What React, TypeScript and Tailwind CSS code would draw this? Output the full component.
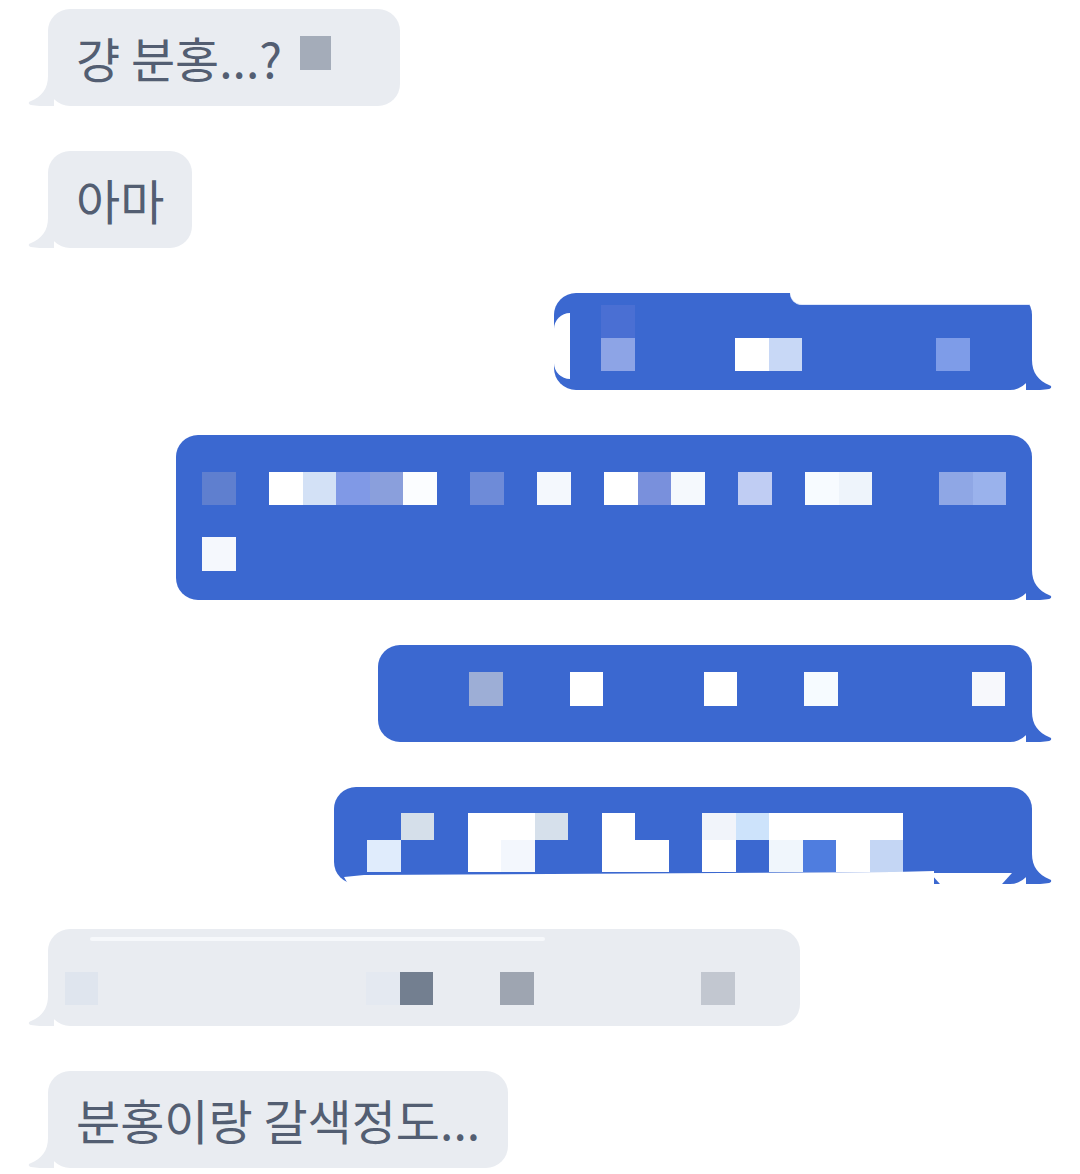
import React from "react";

type Row = (string | null)[];

function Cells({ row, h }: { row: Row; h: string }) {
  return (
    <div className="flex">
      {row.map((c, i) => (
        <div key={i} className={`w-[33.5px] shrink-0 ${h} ${c ?? ""}`} />
      ))}
    </div>
  );
}

function TailLeft({ fill }: { fill: string }) {
  return (
    <svg
      className="absolute left-[-20px] bottom-0"
      width="26"
      height="30"
      viewBox="0 0 26 30"
    >
      <path
        d="M20 0 C20 12 14 21 2 25.5 C0 26.3 0.5 28.5 3 29 C8 30 14 30 26 30 L26 0 Z"
        fill={fill}
      />
    </svg>
  );
}

function TailRight({ fill }: { fill: string }) {
  return (
    <svg
      className="absolute right-[-20px] bottom-0"
      width="26"
      height="30"
      viewBox="0 0 26 30"
    >
      <path
        d="M6 0 C6 12 12 21 24 25.5 C26 26.3 25.5 28.5 23 29 C18 30 12 30 0 30 L0 0 Z"
        fill={fill}
      />
    </svg>
  );
}

const GRAY = "#e9ecf1";
const BLUE = "#3b68d0";

function LeftBubble({
  width,
  children,
}: {
  width: string;
  children: React.ReactNode;
}) {
  return (
    <div className={`relative ml-[48px] h-[97px] ${width} rounded-[22px] bg-[#e9ecf1]`}>
      <TailLeft fill={GRAY} />
      {children}
    </div>
  );
}

function RightBubble({
  width,
  height,
  children,
}: {
  width: string;
  height: string;
  children: React.ReactNode;
}) {
  return (
    <div className={`relative ml-auto mr-[48px] ${height} ${width} rounded-[22px] bg-[#3b68d0]`}>
      <TailRight fill={BLUE} />
      {children}
    </div>
  );
}

const textCls =
  "text-[48px] leading-none whitespace-nowrap text-[#535e72] font-['Noto_Sans_CJK_KR','Noto_Sans',sans-serif]";

export default function App() {
  const b3a: Row = ["bg-[#4a6fd3]"];
  const b3b: Row = [
    "bg-[#8da4e6]",
    null,
    null,
    null,
    "bg-[#ffffff]",
    "bg-[#c8d8f6]",
    null,
    null,
    null,
    null,
    "bg-[#7e9ce8]",
  ];
  const b4a: Row = [
    "bg-[#5f7fcf]",
    null,
    "bg-[#ffffff]",
    "bg-[#d3e1f6]",
    "bg-[#8099e6]",
    "bg-[#8a9fdc]",
    "bg-[#fbfdff]",
    null,
    "bg-[#6e8bd8]",
    null,
    "bg-[#f4f8fd]",
    null,
    "bg-[#ffffff]",
    "bg-[#7990dc]",
    "bg-[#f5f9fd]",
    null,
    "bg-[#c0cdf3]",
    null,
    "bg-[#f7fbff]",
    "bg-[#eef4fb]",
    null,
    null,
    "bg-[#8fa7e5]",
    "bg-[#9ab2ec]",
  ];
  const b4b: Row = ["bg-[#f5f8fd]"];
  const b5: Row = [
    "bg-[#9daed6]",
    null,
    null,
    "bg-[#ffffff]",
    null,
    null,
    null,
    "bg-[#ffffff]",
    null,
    null,
    "bg-[#f6fbff]",
    null,
    null,
    null,
    null,
    "bg-[#f7f8fc]",
  ];
  const b6a: Row = [
    null,
    "bg-[#d5dfea]",
    null,
    "bg-[#ffffff]",
    "bg-[#ffffff]",
    "bg-[#d6e0eb]",
    null,
    "bg-[#ffffff]",
    null,
    null,
    "bg-[#f1f4fa]",
    "bg-[#cde3fb]",
    "bg-[#ffffff]",
    "bg-[#ffffff]",
    "bg-[#ffffff]",
    "bg-[#ffffff]",
  ];
  const b6b: Row = [
    "bg-[#e0ecfc]",
    null,
    null,
    "bg-[#ffffff]",
    "bg-[#f3f7fd]",
    null,
    null,
    "bg-[#ffffff]",
    "bg-[#ffffff]",
    null,
    "bg-[#ffffff]",
    null,
    "bg-[#f0f6fc]",
    "bg-[#4f7ddf]",
    "bg-[#ffffff]",
    "bg-[#c4d6f4]",
  ];
  const b7: Row = [
    "bg-[#dfe5ee]",
    null,
    null,
    null,
    null,
    null,
    null,
    null,
    null,
    "bg-[#e4e9f1]",
    "bg-[#737f90]",
    null,
    null,
    "bg-[#9ea5b1]",
    null,
    null,
    null,
    null,
    null,
    "bg-[#c2c7d0]",
  ];

  return (
    <div className="w-[1080px] h-[1174px] overflow-hidden bg-white pt-[9px] flex flex-col gap-[45px]">
      {/* 1 */}
      <LeftBubble width="w-[352px]">
        <div className="h-full flex items-center pl-[28px] pb-[2px]">
          <span className={textCls}>걍 분홍...?</span>
          <div className="ml-[18px] mb-[8px] w-[31px] h-[34px] bg-[#a4acb9]" />
        </div>
      </LeftBubble>

      {/* 2 */}
      <LeftBubble width="w-[144px]">
        <div className="h-full flex items-center pl-[28px] pb-[2px]">
          <span className={textCls}>아마</span>
        </div>
      </LeftBubble>

      {/* 3 */}
      <RightBubble width="w-[478px]" height="h-[97px]">
        <div className="pt-[12px] pl-[47px] flex flex-col">
          <Cells row={b3a} h="h-[33px]" />
          <Cells row={b3b} h="h-[33px]" />
        </div>
        <div className="absolute left-0 top-[20px] w-[16px] h-[66px] bg-white rounded-l-full" />
        <div className="absolute left-[236px] right-[2px] top-0 h-[12px] bg-white rounded-bl-[14px] border-b border-[#dfe8fa]" />
      </RightBubble>

      {/* 4 */}
      <RightBubble width="w-[856px]" height="h-[165px]">
        <div className="pt-[37px] pl-[26px] flex flex-col gap-[32px]">
          <Cells row={b4a} h="h-[33px]" />
          <Cells row={b4b} h="h-[34px]" />
        </div>
      </RightBubble>

      {/* 5 */}
      <RightBubble width="w-[654px]" height="h-[97px]">
        <div className="pt-[27px] pl-[91px]">
          <Cells row={b5} h="h-[34px]" />
        </div>
      </RightBubble>

      {/* 6 */}
      <RightBubble width="w-[698px]" height="h-[97px]">
        <div className="pt-[26px] pl-[33px] flex flex-col">
          <Cells row={b6a} h="h-[27px]" />
          <Cells row={b6b} h="h-[32px]" />
        </div>
        <svg
          className="absolute left-0 bottom-0"
          width="698"
          height="16"
          viewBox="0 0 698 16"
        >
          <polygon points="14,16 10,9 30,7 560,4 600,3 600,16" fill="#ffffff" />
          <polygon points="596,5 678,5 668,16 606,16" fill="#ffffff" />
        </svg>
      </RightBubble>

      {/* 7 */}
      <LeftBubble width="w-[752px]">
        <div className="pt-[43px] pl-[16.5px]">
          <Cells row={b7} h="h-[33px]" />
        </div>
        <div className="absolute left-[42px] top-[8px] w-[455px] h-[4px] bg-[#f6f8fb] rounded-full" />
      </LeftBubble>

      {/* 8 */}
      <LeftBubble width="w-[460px]">
        <div className="h-full flex items-center pl-[28px] pb-[2px]">
          <span className={textCls}>분홍이랑 갈색정도...</span>
        </div>
      </LeftBubble>
    </div>
  );
}
